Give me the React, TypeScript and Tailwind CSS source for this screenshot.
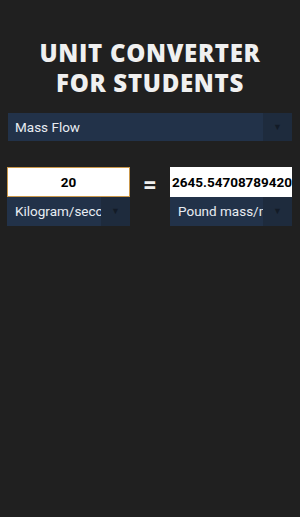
import { useState } from "react";

const font = { fontFamily: "Roboto, 'Liberation Sans', sans-serif" };

function Arrow() {
  return (
    <span className="flex w-[29px] shrink-0 items-center justify-center self-stretch bg-[#1e2b3d]">
      <span className="text-[9px] leading-none text-[#131b27]">▼</span>
    </span>
  );
}

function UnitPicker({ label }: { label: string }) {
  return (
    <div className="flex h-[29px] items-center bg-[#223249]">
      <span className="min-w-0 flex-1 overflow-hidden whitespace-nowrap pl-[8px] text-[13.5px] text-[#e8ecf2]">
        {label}
      </span>
      <Arrow />
    </div>
  );
}

export default function App() {
  const [value] = useState("20");
  const result = "2645.547087894201";

  return (
    <div className="min-h-[517px] w-full bg-[#202020] px-2 pt-[38px]" style={font}>
      <h1
        className="text-center text-[24px] font-extrabold leading-[30px] tracking-[0.7px] text-[#f0f0f0]"
        style={{ fontFamily: "'Open Sans', 'Liberation Sans', sans-serif" }}
      >
        UNIT CONVERTER
        <br />
        FOR STUDENTS
      </h1>

      <div className="mt-[15px] flex h-[28px] items-center bg-[#223249]">
        <span className="flex-1 pl-[7px] text-[13.5px] text-[#e8ecf2]">Mass Flow</span>
        <Arrow />
      </div>

      <div className="mt-[26px] flex items-start justify-between">
        <div className="ml-[-1px] w-[123px]">
          <div className="flex h-[30px] items-center justify-center border border-[#c9974a] bg-white text-[13.5px] font-bold text-black">
            {value}
          </div>
          <UnitPicker label="Kilogram/second" />
        </div>

        <div className="mt-[6px] text-[24px] font-bold leading-none text-[#eeeeee]">=</div>

        <div className="w-[122px]">
          <div className="flex h-[30px] items-center overflow-hidden whitespace-nowrap bg-white pl-[2px] text-[13.5px] font-bold text-black">
            {result}
          </div>
          <UnitPicker label="Pound mass/minute" />
        </div>
      </div>
    </div>
  );
}
